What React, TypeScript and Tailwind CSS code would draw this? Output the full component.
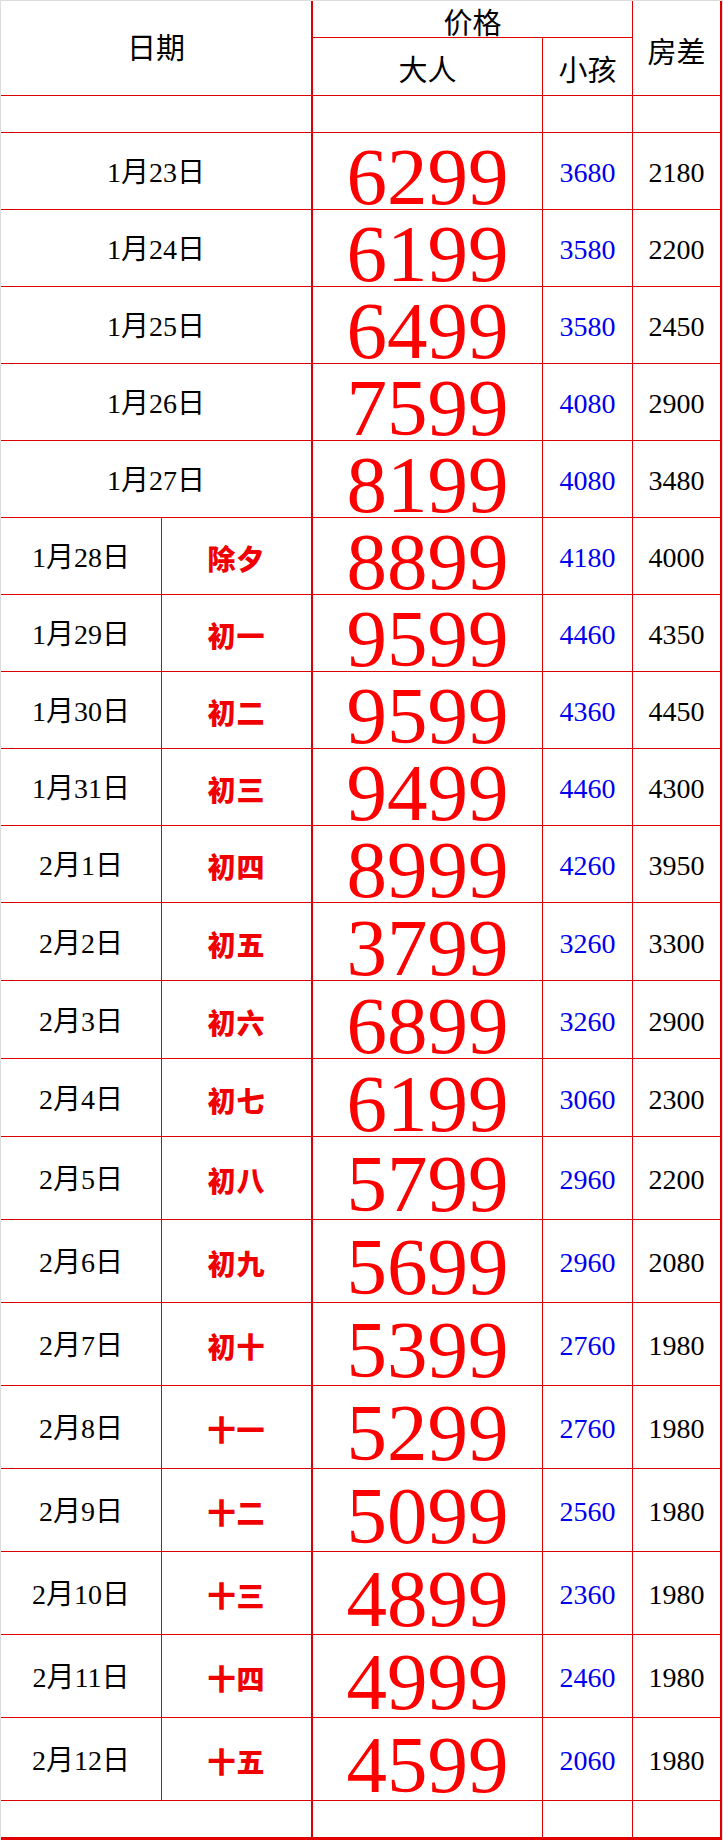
import React from 'react';

type PriceRow = {
    date: string;
    lunar?: string;
    adult: string;
    child: string;
    room: string;
    h: string;
};

const ROWS: PriceRow[] = [
    { date: '1月23日', adult: '6299', child: '3680', room: '2180', h: 'h-[77px]' },
    { date: '1月24日', adult: '6199', child: '3580', room: '2200', h: 'h-[77px]' },
    { date: '1月25日', adult: '6499', child: '3580', room: '2450', h: 'h-[77px]' },
    { date: '1月26日', adult: '7599', child: '4080', room: '2900', h: 'h-[77px]' },
    { date: '1月27日', adult: '8199', child: '4080', room: '3480', h: 'h-[77px]' },
    { date: '1月28日', lunar: '除夕', adult: '8899', child: '4180', room: '4000', h: 'h-[77px]' },
    { date: '1月29日', lunar: '初一', adult: '9599', child: '4460', room: '4350', h: 'h-[77px]' },
    { date: '1月30日', lunar: '初二', adult: '9599', child: '4360', room: '4450', h: 'h-[77px]' },
    { date: '1月31日', lunar: '初三', adult: '9499', child: '4460', room: '4300', h: 'h-[77px]' },
    { date: '2月1日', lunar: '初四', adult: '8999', child: '4260', room: '3950', h: 'h-[77px]' },
    { date: '2月2日', lunar: '初五', adult: '3799', child: '3260', room: '3300', h: 'h-[78px]' },
    { date: '2月3日', lunar: '初六', adult: '6899', child: '3260', room: '2900', h: 'h-[78px]' },
    { date: '2月4日', lunar: '初七', adult: '6199', child: '3060', room: '2300', h: 'h-[78px]' },
    { date: '2月5日', lunar: '初八', adult: '5799', child: '2960', room: '2200', h: 'h-[83px]' },
    { date: '2月6日', lunar: '初九', adult: '5699', child: '2960', room: '2080', h: 'h-[83px]' },
    { date: '2月7日', lunar: '初十', adult: '5399', child: '2760', room: '1980', h: 'h-[83px]' },
    { date: '2月8日', lunar: '十一', adult: '5299', child: '2760', room: '1980', h: 'h-[83px]' },
    { date: '2月9日', lunar: '十二', adult: '5099', child: '2560', room: '1980', h: 'h-[83px]' },
    { date: '2月10日', lunar: '十三', adult: '4899', child: '2360', room: '1980', h: 'h-[83px]' },
    { date: '2月11日', lunar: '十四', adult: '4999', child: '2460', room: '1980', h: 'h-[83px]' },
    { date: '2月12日', lunar: '十五', adult: '4599', child: '2060', room: '1980', h: 'h-[83px]' },
];

const cell = 'flex items-center justify-center border-[#e00000]';
const serif = "font-[family-name:'Liberation_Serif','Noto_Sans_CJK_SC',serif]";
const cjk = "font-[family-name:'Noto_Sans_CJK_SC','Noto_Sans',sans-serif]";

function BlankRow() {
    return (
        <div className="flex h-[37px]">
            <div className={`${cell} w-[312px] border-r-2 border-b`} />
            <div className={`${cell} w-[230px] border-r border-b`} />
            <div className={`${cell} w-[90px] border-r border-b`} />
            <div className={`${cell} w-[89px] border-r-2 border-b`} />
        </div>
    );
}

export default function App() {
    return (
        <div className="w-[723px] bg-white border-t border-l border-r border-[#dcdcdc] text-black">
            <div className="border-b-2 border-[#e00000]">
                {/* Header */}
                <div className={`flex h-[95px] ${cjk} text-[29px] leading-none`}>
                    <div className={`${cell} w-[312px] border-r-2 border-b pb-1`}>日期</div>
                    <div className="flex w-[320px] flex-col border-r border-b border-[#e00000]">
                        <div className={`${cell} h-[37px] border-b pt-1`}>价格</div>
                        <div className="flex flex-1">
                            <div className={`${cell} w-[230px] border-r pt-1`}>大人</div>
                            <div className={`${cell} flex-1 pt-1`}>小孩</div>
                        </div>
                    </div>
                    <div className={`${cell} w-[89px] border-r-2 border-b pt-1`}>房差</div>
                </div>

                <BlankRow />

                {/* Price rows */}
                {ROWS.map((row) => (
                    <div key={row.date} className={`flex ${row.h}`}>
                        {row.lunar ? (
                            <div className="flex w-[312px] border-r-2 border-b border-[#e00000]">
                                <div className={`${cell} w-[161px] border-r pt-1 ${serif} text-[28px] leading-none`}>
                                    {row.date}
                                </div>
                                <div
                                    className={`${cell} flex-1 pt-1 ${cjk} text-[28px] leading-none font-black text-[#f00000] tracking-[1px]`}
                                >
                                    {row.lunar}
                                </div>
                            </div>
                        ) : (
                            <div className={`${cell} w-[312px] border-r-2 border-b pt-1 ${serif} text-[28px] leading-none`}>
                                {row.date}
                            </div>
                        )}
                        <div
                            className={`${cell} w-[230px] border-r border-b pt-3 font-['Liberation_Serif',serif] text-[81px] leading-[58px] text-[#ff0000]`}
                        >
                            {row.adult}
                        </div>
                        <div
                            className={`${cell} w-[90px] border-r border-b pt-1 font-['Liberation_Serif',serif] text-[28px] leading-none text-[#0000f0]`}
                        >
                            {row.child}
                        </div>
                        <div
                            className={`${cell} w-[89px] border-r-2 border-b pt-1 font-['Liberation_Serif',serif] text-[28px] leading-none`}
                        >
                            {row.room}
                        </div>
                    </div>
                ))}

                <BlankRow />
            </div>
        </div>
    );
}
